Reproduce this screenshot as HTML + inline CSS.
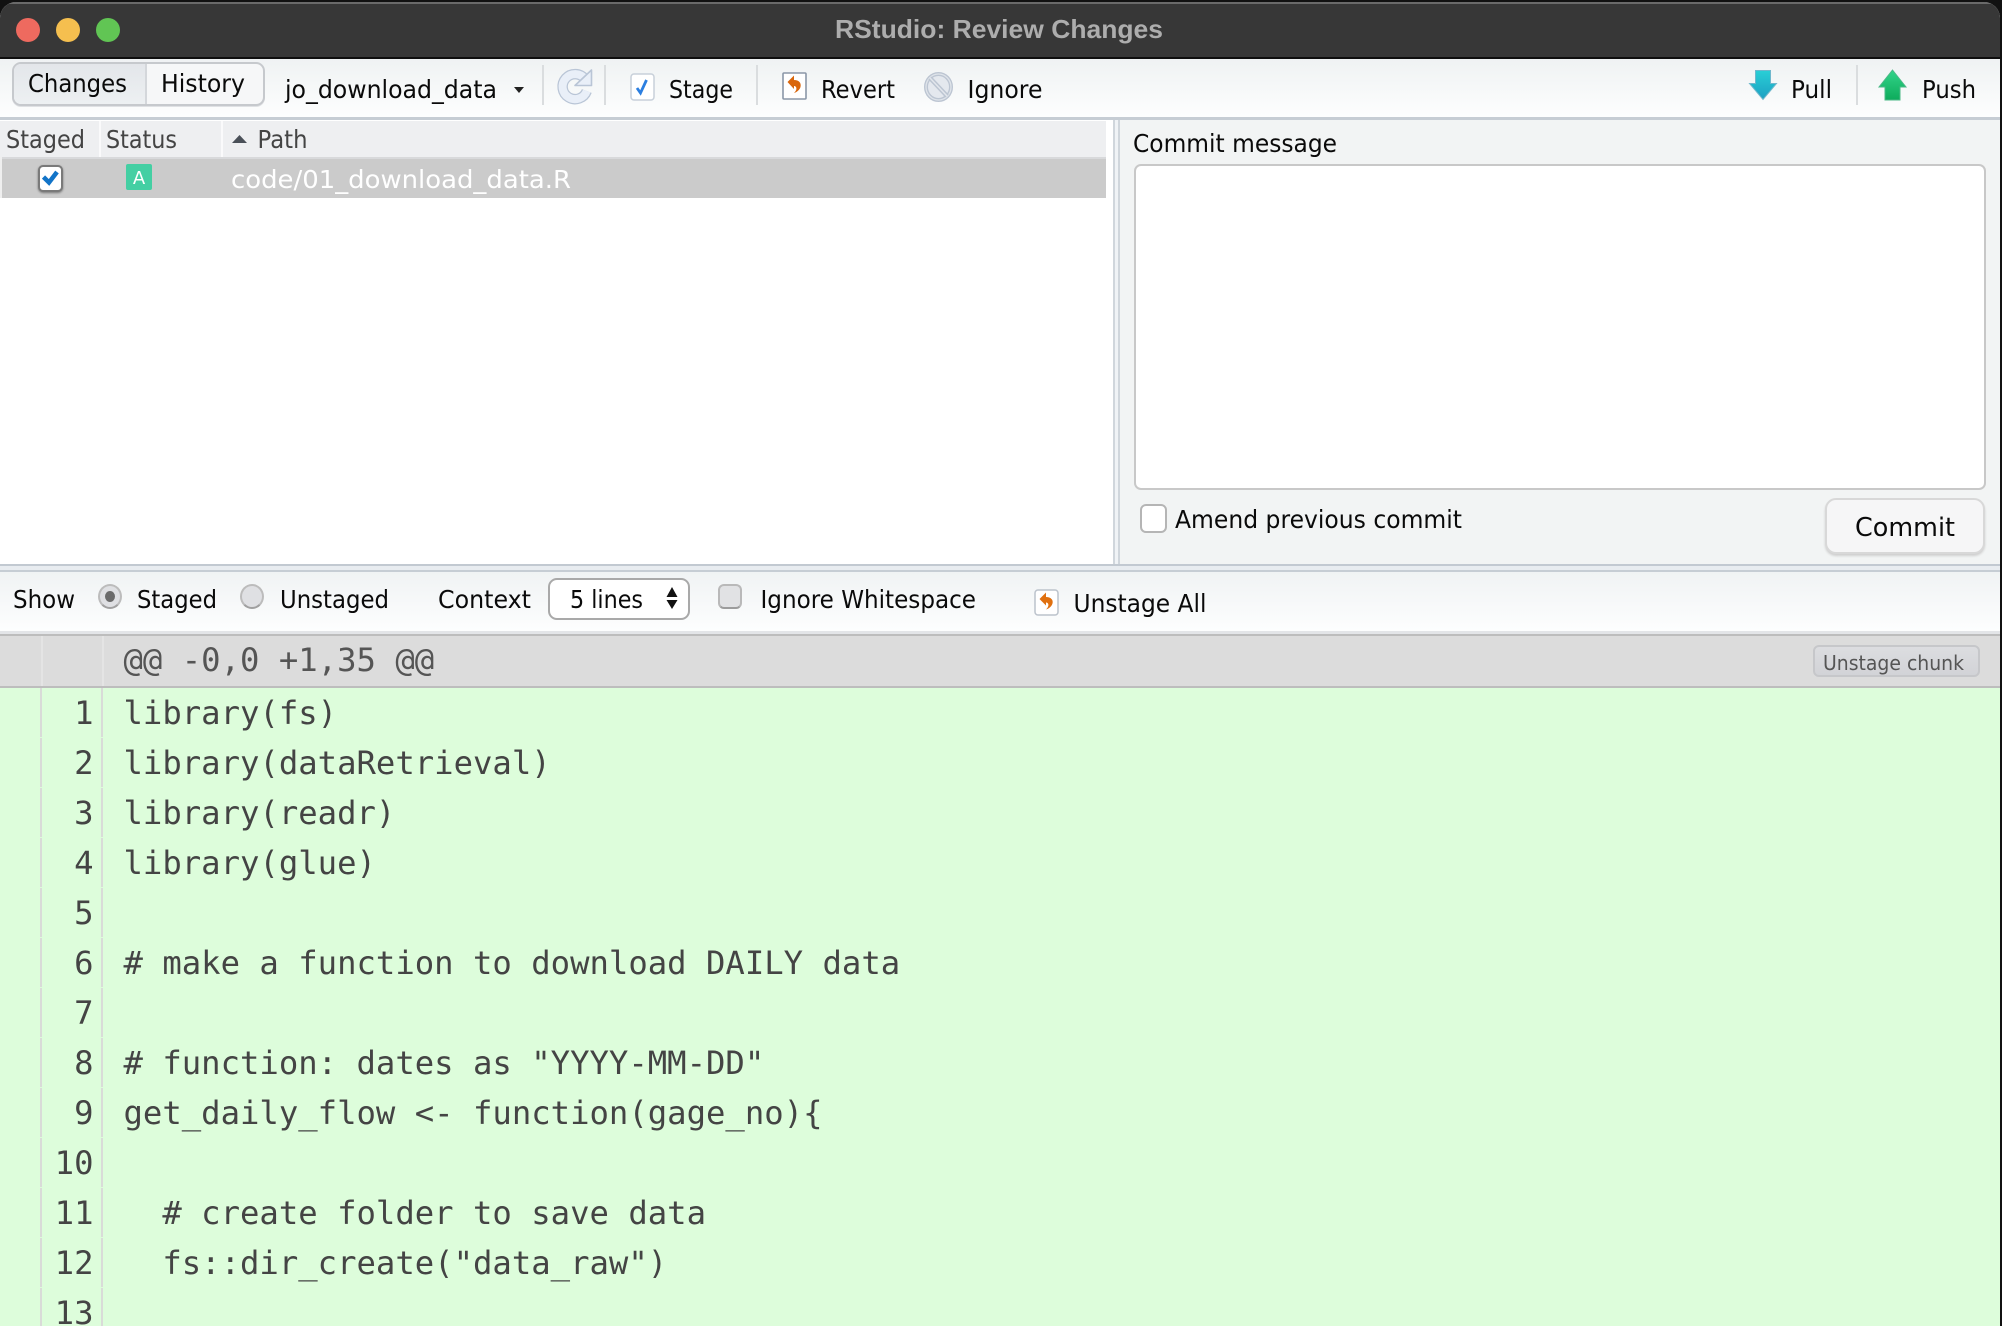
<!DOCTYPE html>
<html><head><meta charset="utf-8"><title>RStudio: Review Changes</title>
<style>
html,body{margin:0;padding:0;width:2002px;height:1326px;overflow:hidden;background:#111}
.a{position:absolute}
svg{position:absolute;left:0;top:0;filter:blur(.3px)}
.s{font-family:"DejaVu Sans","Liberation Sans",sans-serif;font-size:24.5px;fill:#0a0a0a}
.m{font-family:"DejaVu Sans Mono","Liberation Mono",monospace;font-size:32.25px;fill:#444;white-space:pre}
</style></head>
<body>
<div id="win" class="a" style="left:0;top:2px;width:2000px;height:1324px;background:#fff;border-radius:16px 16px 0 0;overflow:hidden">
<div class="a" style="left:0;top:0;width:2000px;height:55px;background:#373737;border-top:2px solid #6a6a6a;box-sizing:content-box"></div>
<div class="a" style="left:0;top:55px;width:2000px;height:2px;background:#0e0e0e"></div>
</div>
<!-- top toolbar -->
<div class="a" style="left:0;top:59px;width:2000px;height:58px;background:linear-gradient(#eff2f3,#fdfefe)"></div>
<div class="a" style="left:0;top:117px;width:2000px;height:3px;background:#c6cdd4"></div>
<!-- tabs -->
<div class="a" style="left:12px;top:62px;width:253px;height:44px;box-sizing:border-box;border:2px solid #c6c9cd;border-radius:9px;background:#f6f7f8;overflow:hidden;box-shadow:0 1px 0 #dfe1e4">
<div class="a" style="left:0;top:0;width:131px;height:40px;background:linear-gradient(#e3e6ea,#edf0f2);border-right:2px solid #d4d7db"></div>
</div>
<!-- separators -->
<div class="a" style="left:542px;top:65px;width:2px;height:40px;background:#dadddf"></div>
<div class="a" style="left:604px;top:65px;width:2px;height:40px;background:#dadddf"></div>
<div class="a" style="left:756px;top:65px;width:2px;height:40px;background:#dadddf"></div>
<div class="a" style="left:1856px;top:65px;width:2px;height:40px;background:#dadddf"></div>
<!-- left pane -->
<div class="a" style="left:0;top:120px;width:1113px;height:444px;background:#fff"></div>
<div class="a" style="left:0;top:121px;width:1106px;height:36px;background:#eeeff1"></div>
<div class="a" style="left:99px;top:121px;width:2px;height:36px;background:#fafafb"></div>
<div class="a" style="left:221px;top:121px;width:2px;height:36px;background:#fafafb"></div>
<div class="a" style="left:0;top:157px;width:1106px;height:41px;background:#cbcbcb"></div>
<div class="a" style="left:0;top:157px;width:1106px;height:2px;background:#d8d9db"></div>
<div class="a" style="left:0;top:157px;width:2px;height:41px;background:#efefef"></div>
<div class="a" style="left:38px;top:165px;width:25px;height:27px;box-sizing:border-box;background:#fff;border:2px solid #7a7a7a;border-radius:5px;box-shadow:0 1px 2px #777"></div>
<div class="a" style="left:126px;top:164px;width:26px;height:26px;background:#44cfa3;border-radius:2px"></div>
<!-- splitter vertical and right pane -->
<div class="a" style="left:1113px;top:120px;width:7px;height:444px;background:#f0f3f6;border-left:2px solid #d0d6dc;border-right:2px solid #d0d6dc;box-sizing:border-box"></div>
<div class="a" style="left:1120px;top:120px;width:880px;height:444px;background:#f2f4f4"></div>
<div class="a" style="left:1134px;top:164px;width:852px;height:326px;box-sizing:border-box;background:#fff;border:2px solid #c8c8c8;border-radius:7px"></div>
<div class="a" style="left:1140px;top:504px;width:27px;height:29px;box-sizing:border-box;background:#fff;border:2px solid #b5b5b5;border-radius:6px"></div>
<div class="a" style="left:1825px;top:498px;width:160px;height:56px;box-sizing:border-box;background:#f6f6f7;border:2px solid #d8d8d8;border-radius:11px;box-shadow:0 2px 2px #cfcfcf"></div>
<!-- splitter horizontal -->
<div class="a" style="left:0;top:564px;width:2000px;height:8px;background:#e8ecf0;border-top:2px solid #c2c9d1;border-bottom:2px solid #c6cdd4;box-sizing:border-box"></div>
<!-- second toolbar -->
<div class="a" style="left:0;top:572px;width:2000px;height:59px;background:linear-gradient(#f0f3f4,#fdfefe)"></div>
<div class="a" style="left:0;top:631px;width:2000px;height:3px;background:#e3e5e8"></div>
<div class="a" style="left:548px;top:578px;width:142px;height:42px;box-sizing:border-box;background:#fff;border:2px solid #a9a9a9;border-radius:9px"></div>
<div class="a" style="left:718px;top:584px;width:24px;height:25px;box-sizing:border-box;background:#e1e2e4;border:2px solid #b9b9b9;border-bottom-color:#9c9c9c;border-radius:6px"></div>
<div class="a" style="left:98px;top:584px;width:24px;height:25px;box-sizing:border-box;background:#dfe0e3;border:2px solid #bcbcbc;border-bottom-color:#a0a0a0;border-radius:50%"></div>
<div class="a" style="left:105px;top:591px;width:10px;height:11px;background:#6b6b6b;border-radius:50%"></div>
<div class="a" style="left:240px;top:584px;width:24px;height:25px;box-sizing:border-box;background:#dfe0e3;border:2px solid #bcbcbc;border-bottom-color:#a0a0a0;border-radius:50%"></div>
<!-- hunk header -->
<div class="a" style="left:0;top:634px;width:2000px;height:54px;box-sizing:border-box;background:#dcdcdc;border-top:2px solid #bdbdbd;border-bottom:2px solid #bdbdbd"></div>
<div class="a" style="left:41px;top:636px;width:2px;height:50px;background:#e4e4e4"></div>
<div class="a" style="left:102px;top:636px;width:2px;height:50px;background:#e4e4e4"></div>
<div class="a" style="left:1813px;top:645px;width:167px;height:32px;box-sizing:border-box;background:linear-gradient(#dcdde0,#d2d3d7);border:2px solid #c6c7ca;border-radius:6px"></div>
<!-- code -->
<div class="a" style="left:0;top:688px;width:2000px;height:638px;background:#ddfddb"></div>
<div class="a" style="left:40px;top:688px;width:2px;height:638px;background:repeating-linear-gradient(#d9dbd8 0,#d9dbd8 49px,#ddfddb 49px,#ddfddb 50px)"></div>
<div class="a" style="left:101px;top:688px;width:2px;height:638px;background:repeating-linear-gradient(#d9dbd8 0,#d9dbd8 49px,#ddfddb 49px,#ddfddb 50px)"></div>

<svg width="2002" height="1326" viewBox="0 0 2002 1326" xmlns="http://www.w3.org/2000/svg">
<defs>
<linearGradient id="pu" x1="0" y1="0" x2="0" y2="1"><stop offset="0" stop-color="#29cfd6"/><stop offset="1" stop-color="#1c9fc2"/></linearGradient>
<linearGradient id="pg" x1="0" y1="0" x2="0" y2="1"><stop offset="0" stop-color="#33d48a"/><stop offset="1" stop-color="#0dab5b"/></linearGradient>
</defs>
<!-- traffic lights -->
<ellipse cx="28" cy="30" rx="12" ry="12" fill="#ee6a5f"/>
<ellipse cx="68" cy="30" rx="12" ry="12" fill="#f5bf4f"/>
<ellipse cx="108" cy="30" rx="12" ry="12" fill="#61c554"/>
<text x="835" y="38" textLength="328" lengthAdjust="spacingAndGlyphs" font-family="Liberation Sans,sans-serif" font-weight="700" font-size="26" fill="#adadad">RStudio: Review Changes</text>

<!-- toolbar text -->
<text class="s" x="28" y="92" textLength="99" lengthAdjust="spacingAndGlyphs">Changes</text>
<text class="s" x="161" y="92" textLength="84" lengthAdjust="spacingAndGlyphs">History</text>
<text class="s" x="285" y="98" textLength="212" lengthAdjust="spacingAndGlyphs">jo_download_data</text>
<path d="M514 87h10l-5 6z" fill="#222"/>
<text class="s" x="669" y="98" textLength="64" lengthAdjust="spacingAndGlyphs">Stage</text>
<text class="s" x="821" y="98" textLength="74" lengthAdjust="spacingAndGlyphs">Revert</text>
<text class="s" x="967.500" y="98" textLength="75" lengthAdjust="spacingAndGlyphs">Ignore</text>
<text class="s" x="1791" y="98" textLength="41" lengthAdjust="spacingAndGlyphs">Pull</text>
<text class="s" x="1922" y="98" textLength="54" lengthAdjust="spacingAndGlyphs">Push</text>

<!-- refresh icon -->
<path d="M585 79A12.500 12.500 0 1 0 586.800 91" fill="none" stroke="#b9c5d6" stroke-width="10.500"/>
<path d="M585 79A12.500 12.500 0 1 0 586.800 91" fill="none" stroke="#e9eff8" stroke-width="8"/>
<path d="M591.500 70v15.500h-16.500z" fill="#e9eff8" stroke="#b9c5d6" stroke-width="1.600" stroke-linejoin="round"/>
<!-- stage icon -->
<rect x="631" y="74" width="23" height="26" rx="3" fill="#fff" stroke="#c8d0da" stroke-width="1.500"/>
<path d="M637 88l3.500 5 6-13" fill="none" stroke="#2c7fe0" stroke-width="2.800"/>
<!-- revert icon -->
<rect x="783" y="73" width="23" height="26" rx="1" fill="#fff" stroke="#8b97a8" stroke-width="1.600"/>
<path d="M787.500 82l6.500-6.500v4.500c5 0 7.500 3 6.500 7-1 3-3.500 5-6.500 6 2-2 3-4 2-6-1-1-1.500-1-2-1v3z" fill="#d9660c"/>
<!-- ignore icon -->
<ellipse cx="938.500" cy="87" rx="12.500" ry="13" fill="#e4e8ee" stroke="#bcc5d2" stroke-width="4"/>
<ellipse cx="938.500" cy="87" rx="12.500" ry="13" fill="none" stroke="#dfe4ea" stroke-width="1.300"/>
<path d="M930 78l17 18" stroke="#bcc5d2" stroke-width="4.500"/>
<path d="M930 78l17 18" stroke="#e2e6ec" stroke-width="1.500"/>
<!-- pull / push -->
<path d="M1755.500 70.500h15v13h6l-13.500 16-13.500-16h6z" fill="url(#pu)" stroke="#6fb7cc" stroke-width="1"/>
<path d="M1892.500 70l13.500 17h-6v13h-15v-13h-6z" fill="url(#pg)" stroke="#4cb987" stroke-width="1"/>

<!-- table text -->
<text class="s" x="6" y="148" textLength="79" lengthAdjust="spacingAndGlyphs" style="fill:#444">Staged</text>
<text class="s" x="106" y="148" textLength="71" lengthAdjust="spacingAndGlyphs" style="fill:#444">Status</text>
<path d="M232 143l7.500-8 7.500 8z" fill="#4a5058"/>
<text class="s" x="257.500" y="148" textLength="50" lengthAdjust="spacingAndGlyphs" style="fill:#444">Path</text>
<path d="M43.500 177l5.500 5.500 8-10.500" fill="none" stroke="#1274c8" stroke-width="4.500"/>
<text x="139" y="184" text-anchor="middle" font-family="DejaVu Sans,sans-serif" font-size="18" fill="#fff">A</text>
<text class="s" x="231" y="188" textLength="340" lengthAdjust="spacingAndGlyphs" style="fill:#fff">code/01_download_data.R</text>

<!-- right pane text -->
<text class="s" x="1133" y="152" textLength="204" lengthAdjust="spacingAndGlyphs">Commit message</text>
<text class="s" x="1175" y="528" textLength="287" lengthAdjust="spacingAndGlyphs">Amend previous commit</text>
<text class="s" x="1855" y="536" textLength="100" lengthAdjust="spacingAndGlyphs" style="font-size:26px">Commit</text>

<!-- second toolbar text -->
<text class="s" x="13" y="608" textLength="62" lengthAdjust="spacingAndGlyphs">Show</text>
<text class="s" x="137" y="608" textLength="80" lengthAdjust="spacingAndGlyphs">Staged</text>
<text class="s" x="280" y="608" textLength="109" lengthAdjust="spacingAndGlyphs">Unstaged</text>
<text class="s" x="438" y="608" textLength="93" lengthAdjust="spacingAndGlyphs">Context</text>
<text class="s" x="570" y="608" textLength="73" lengthAdjust="spacingAndGlyphs">5 lines</text>
<path d="M666.500 597l5.500-10 5.500 10zM666.500 600l5.500 9 5.500-9z" fill="#111"/>
<text class="s" x="760.500" y="608" textLength="215.500" lengthAdjust="spacingAndGlyphs">Ignore Whitespace</text>
<rect x="1035" y="590" width="23" height="25" rx="3" fill="#fff" stroke="#bcc3cc" stroke-width="1.500"/>
<path d="M1039.500 599l6.500-6.500v4.500c5 0 7.500 3 6.500 6.500-1 3-3.500 5-6.500 6 2-2 3-4 2-6-1-1-1.500-1-2-1v3z" fill="#e0700f"/>
<text class="s" x="1073.500" y="612" textLength="133" lengthAdjust="spacingAndGlyphs">Unstage All</text>
<text class="m" x="123.500" y="671" style="fill:#555">@@ -0,0 +1,35 @@</text>
<text x="1823" y="670" textLength="141" lengthAdjust="spacingAndGlyphs" font-family="DejaVu Sans,sans-serif" font-size="20" fill="#555">Unstage chunk</text>

<!-- code -->
<g text-anchor="end">
<text class="m" x="93.500" y="724">1</text>
<text class="m" x="93.500" y="774">2</text>
<text class="m" x="93.500" y="824">3</text>
<text class="m" x="93.500" y="874">4</text>
<text class="m" x="93.500" y="924">5</text>
<text class="m" x="93.500" y="974">6</text>
<text class="m" x="93.500" y="1024">7</text>
<text class="m" x="93.500" y="1074">8</text>
<text class="m" x="93.500" y="1124">9</text>
<text class="m" x="93.500" y="1174">10</text>
<text class="m" x="93.500" y="1224">11</text>
<text class="m" x="93.500" y="1274">12</text>
<text class="m" x="93.500" y="1324">13</text>
</g>
<text class="m" x="123.500" y="724">library(fs)</text>
<text class="m" x="123.500" y="774">library(dataRetrieval)</text>
<text class="m" x="123.500" y="824">library(readr)</text>
<text class="m" x="123.500" y="874">library(glue)</text>
<text class="m" x="123.500" y="974"># make a function to download DAILY data</text>
<text class="m" x="123.500" y="1074"># function: dates as "YYYY-MM-DD"</text>
<text class="m" x="123.500" y="1124">get_daily_flow &lt;- function(gage_no){</text>
<text class="m" x="123.500" y="1224">  # create folder to save data</text>
<text class="m" x="123.500" y="1274">  fs::dir_create("data_raw")</text>
</svg>
</body></html>
